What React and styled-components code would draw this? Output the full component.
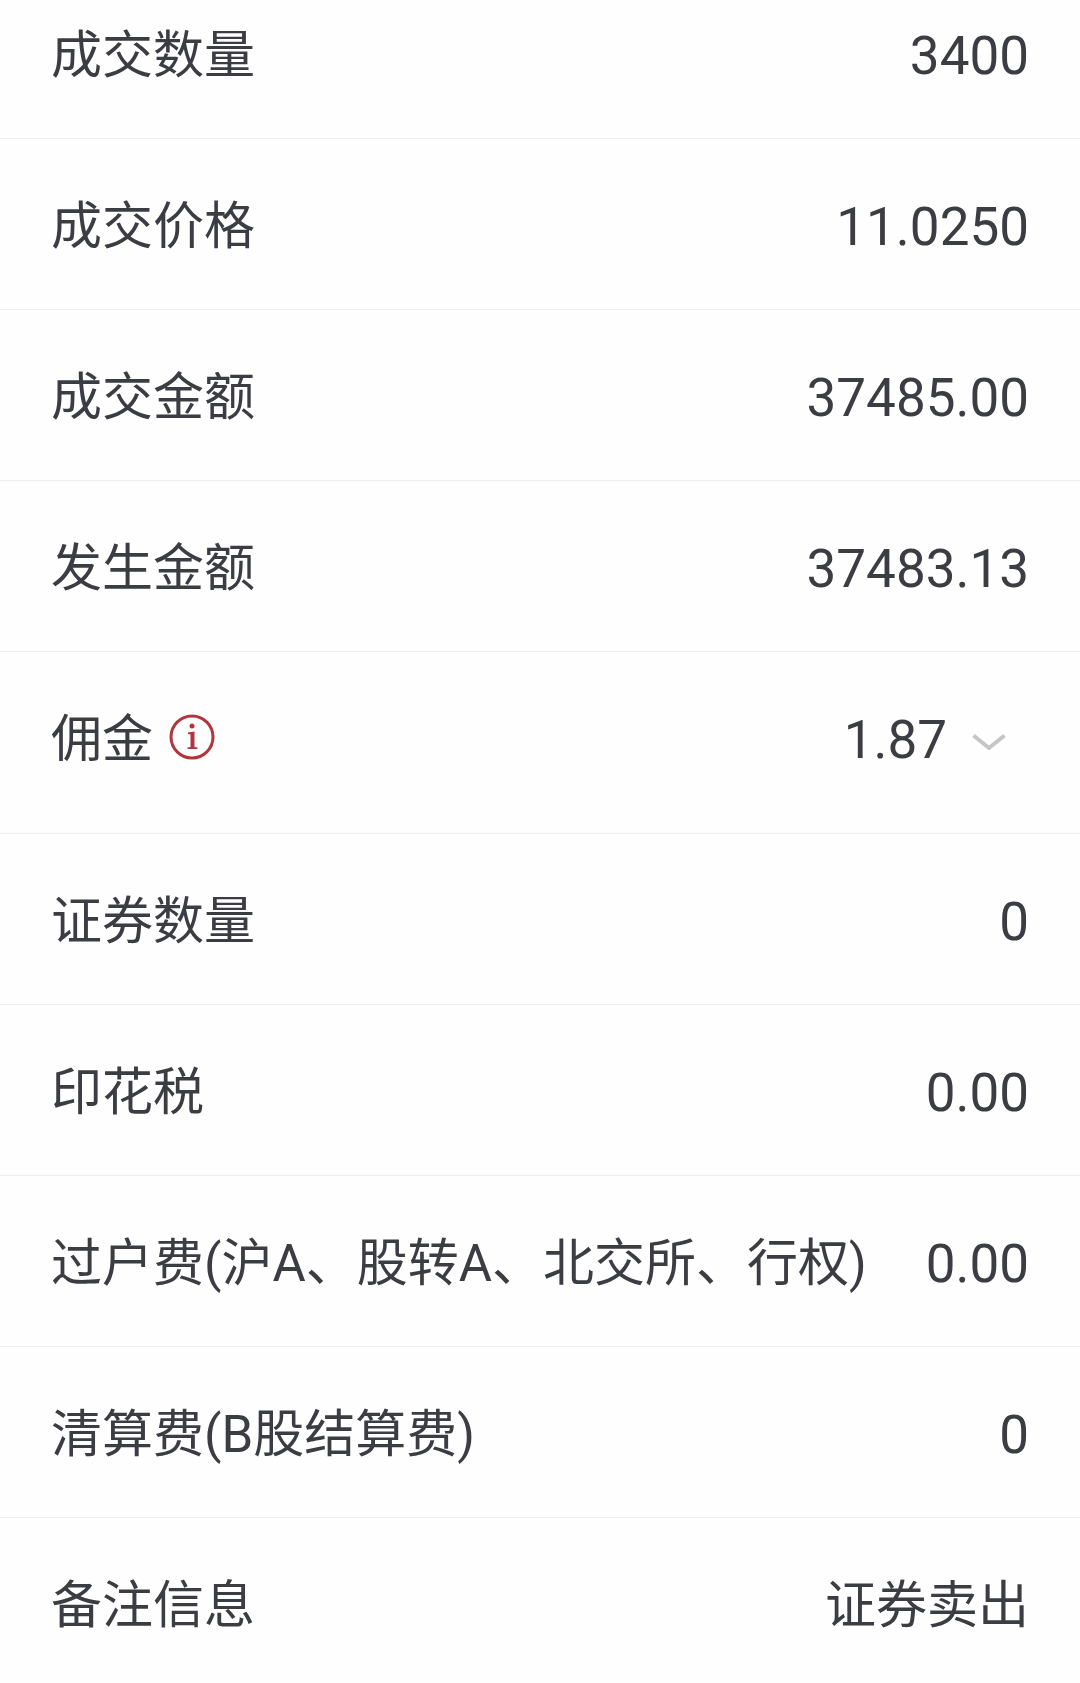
import React from "react";
import styled, { createGlobalStyle } from "styled-components";

const GlobalStyle = createGlobalStyle`
    body {
        margin: 0;
        background: #fefefe;
        color: #3b3d43;
        font-family: Roboto, "Noto Sans CJK SC", sans-serif;
    }
`

const List = styled.dl`
    margin: 0;
    overflow: hidden;
`

const Row = styled.div`
    display: flex;
    justify-content: space-between;
    padding: 52px 51px ${props => props.$expandable ? 57 : 46}px;
    border-bottom: 1px solid #ededee;

    &:first-child {
        padding-top: 20px;
    }

    &:last-child {
        border-bottom: 0;
    }
`

const Label = styled.dt`
    display: flex;
    align-items: center;
    gap: 16px;
    font-size: 51px;
    line-height: 72px;
    white-space: nowrap;
`

const Value = styled.dd`
    display: flex;
    align-items: center;
    gap: 24px;
    margin: 0;
    padding-right: ${props => props.$expandable ? 22 : 0}px;
    font-size: ${props => props.$text ? 51 : 53}px;
    line-height: 72px;
    white-space: nowrap;
`

const IconButton = styled.button`
    display: flex;
    padding: 0;
    border: 0;
    background: none;
    cursor: pointer;
`

const InfoIcon = () => (
    <svg width="46" height="52" viewBox="0 0 46 52" fill="none">
        <circle cx="23" cy="23" r="21" stroke="#b0353c" strokeWidth="3" />
        <circle cx="23" cy="12" r="2.5" fill="#b0353c" />
        <path d="M19 18.5L25.5 17.5V33L28.5 33.5V35H18.5V33.5L21.5 33V20.5L19 20Z" fill="#b0353c" />
    </svg>
)

const ChevronIcon = () => (
    <svg width="36" height="26" viewBox="0 0 36 26" fill="none">
        <path d="M2.5 8.5L18 21L33.5 8.5" stroke="#c6c6c7" strokeWidth="4" />
    </svg>
)

const rows = [
    { label: "成交数量", value: "3400" },
    { label: "成交价格", value: "11.0250" },
    { label: "成交金额", value: "37485.00" },
    { label: "发生金额", value: "37483.13" },
    { label: "佣金", value: "1.87", expandable: true },
    { label: "证券数量", value: "0" },
    { label: "印花税", value: "0.00" },
    { label: "过户费(沪A、股转A、北交所、行权)", value: "0.00" },
    { label: "清算费(B股结算费)", value: "0" },
    { label: "备注信息", value: "证券卖出", text: true }
];

const App = () => (
    <>
        <GlobalStyle />
        <List>
            {rows.map(row => (
                <Row key={row.label} $expandable={row.expandable}>
                    <Label>
                        {row.label}
                        {row.expandable && <IconButton type="button" aria-label="佣金说明"><InfoIcon /></IconButton>}
                    </Label>
                    <Value $expandable={row.expandable} $text={row.text}>
                        {row.value}
                        {row.expandable && <IconButton type="button" aria-label="展开"><ChevronIcon /></IconButton>}
                    </Value>
                </Row>
            ))}
        </List>
    </>
)

export default App
